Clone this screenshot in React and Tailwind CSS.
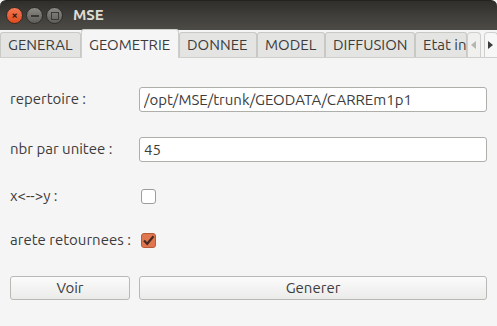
import { useState } from "react"

const tabs = [
  { label: "GENERAL", w: "w-[81px]" },
  { label: "GEOMETRIE", w: "w-[98px]" },
  { label: "DONNEE", w: "w-[78px]" },
  { label: "MODEL", w: "w-[68px]" },
  { label: "DIFFUSION", w: "w-[90px]" },
  { label: "Etat initial", w: "w-[52px]" },
]

function Check({ checked, onChange }) {
  return (
    <button
      onClick={onChange}
      className={`w-[15px] h-[15px] rounded-[3px] border flex items-center justify-center ${
        checked ? "bg-[#e0764f] border-[#b85a37]" : "bg-white border-[#9d9d99]"
      }`}
    >
      {checked && (
        <svg width="13" height="13" viewBox="0 0 13 13">
          <path d="M2 6.5 L5.2 9.8 L11.5 2.2" fill="none" stroke="#4a2a20" strokeWidth="2.2" />
        </svg>
      )}
    </button>
  )
}

export default function App() {
  const [active, setActive] = useState(1)
  const [dir, setDir] = useState("/opt/MSE/trunk/GEODATA/CARREm1p1")
  const [nbr, setNbr] = useState("45")
  const [swap, setSwap] = useState(false)
  const [arete, setArete] = useState(true)

  return (
    <div
      className="w-[497px] h-[326px] flex flex-col bg-[#f5f5f5] text-[#3c3c3c] overflow-hidden"
      style={{ fontFamily: "Ubuntu, 'Open Sans', 'DejaVu Sans', sans-serif" }}
    >
      {/* title bar */}
      <div className="h-[30px] shrink-0 rounded-t-[6px] bg-gradient-to-b from-[#2f2e2b] via-[#3f3e3a] to-[#4d4b46] flex items-center pl-[6px] border-t border-[#242320]">
        <div className="w-[17px] h-[17px] rounded-full bg-gradient-to-b from-[#f37853] to-[#df4a1c] border border-[#3a2a22] flex items-center justify-center text-[#3b1a0c] text-[11px] leading-none font-bold">
          ×
        </div>
        <div className="ml-[3px] w-[17px] h-[17px] rounded-full bg-gradient-to-b from-[#8a8984] to-[#5f5e59] border border-[#2e2d2a] flex items-center justify-center">
          <div className="w-[8px] h-[2px] bg-[#3a3935]" />
        </div>
        <div className="ml-[3px] w-[17px] h-[17px] rounded-full bg-gradient-to-b from-[#8a8984] to-[#5f5e59] border border-[#2e2d2a] flex items-center justify-center">
          <div className="w-[8px] h-[8px] border-[1.5px] border-[#3a3935]" />
        </div>
        <span className="ml-[10px] text-[15px] font-bold text-[#dfdbd2]">MSE</span>
      </div>

      {/* tabs */}
      <div className="h-[28px] shrink-0 flex items-end bg-[#f5f5f5] border-b border-[#cfcfcd]">
        {tabs.map((t, i) => (
          <button
            key={t.label}
            onClick={() => setActive(i)}
            className={`${t.w} shrink-0 overflow-hidden whitespace-nowrap text-left pl-[7px] text-[15px] border border-b-0 rounded-t-[3px] ${
              active === i
                ? "h-[29px] -mb-px bg-[#f5f5f5] border-[#cfcfcd] pt-[2px]"
                : "h-[25px] bg-[#e4e4e2] border-[#c8c8c5] text-[#3c3c3c]"
            }`}
          >
            {t.label}
          </button>
        ))}
        <div className="w-[14px] h-[25px] shrink-0 bg-[#f0f0ef] border border-b-0 border-[#cfcfcd] rounded-t-[4px] flex items-center justify-center">
          <svg width="6" height="8" viewBox="0 0 6 8"><path d="M5 0 L0 4 L5 8 Z" fill="#b5b5b2" /></svg>
        </div>
        <div className="ml-[3px] w-[14px] h-[25px] shrink-0 bg-[#f7f7f7] border border-b-0 border-[#cfcfcd] rounded-t-[4px] flex items-center justify-center">
          <svg width="6" height="8" viewBox="0 0 6 8"><path d="M0 0 L5 4 L0 8 Z" fill="#3c3c3c" /></svg>
        </div>
      </div>

      {/* content */}
      <div className="flex-1 flex flex-col px-[10px] pt-[29px] text-[15px]">
        <div className="flex items-center h-[25px]">
          <span className="w-[129px]">repertoire :</span>
          <input
            value={dir}
            onChange={(e) => setDir(e.target.value)}
            className="flex-1 h-[25px] bg-white border border-[#aeaeab] rounded-[3px] px-[4px] text-[15px] text-[#3c3c3c] outline-none"
          />
        </div>
        <div className="flex items-center h-[25px] mt-[25px]">
          <span className="w-[129px]">nbr par unitee :</span>
          <input
            value={nbr}
            onChange={(e) => setNbr(e.target.value)}
            className="flex-1 h-[25px] bg-white border border-[#aeaeab] rounded-[3px] px-[4px] text-[15px] text-[#3c3c3c] outline-none"
          />
        </div>
        <div className="flex items-center h-[15px] mt-[27px]">
          <span className="w-[131px]">x&lt;--&gt;y :</span>
          <Check checked={swap} onChange={() => setSwap(!swap)} />
        </div>
        <div className="flex items-center h-[15px] mt-[29px]">
          <span className="w-[131px]">arete retournees :</span>
          <Check checked={arete} onChange={() => setArete(!arete)} />
        </div>
        <div className="flex gap-[9px] mt-[28px]">
          <button className="w-[120px] h-[24px] rounded-[3px] border border-[#b8b8b5] bg-gradient-to-b from-[#fbfbfb] to-[#ebebea] text-[15px]">
            Voir
          </button>
          <button className="flex-1 h-[24px] rounded-[3px] border border-[#b8b8b5] bg-gradient-to-b from-[#fbfbfb] to-[#ebebea] text-[15px]">
            Generer
          </button>
        </div>
      </div>
    </div>
  )
}
